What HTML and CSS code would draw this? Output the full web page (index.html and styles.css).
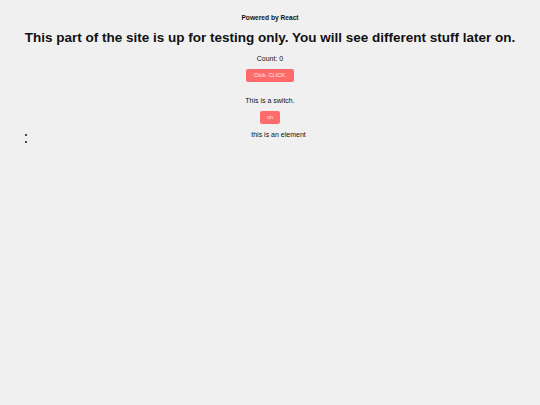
FILE: index.html
```html
<!DOCTYPE html>
<html>
<head>
<meta charset="utf-8">
<link rel="stylesheet" href="styles.css">
</head>
<body>
<div class="app">
  <h5 class="powered">Powered by React</h5>
  <h1 class="title">This part of the site is up for testing only. You will see different stuff later on.</h1>
  <p class="count">Count: 0</p>
  <button class="btn btn-click">Click. CLICK.</button>
  <p class="switch-text">This is a switch.</p>
  <button class="btn btn-on">on</button>
  <ul class="list">
    <li>this is an element</li>
    <li></li>
  </ul>
</div>
</body>
</html>
```
FILE: styles.css
```css
html, body {
  background: #f0f0f0;
}
body {
  margin: 8px;
  font-family: "Liberation Sans", Arial, sans-serif;
  font-size: 7px;
  color: #111;
}
.app {
  text-align: center;
}
.powered {
  font-size: 6.64px;
  font-weight: bold;
  margin: 6px 0 0;
}
.title {
  font-size: 13.5px;
  font-weight: bold;
  margin: 9px 0 0;
}
.count {
  margin: 9.5px 0 0;
}
.btn {
  font-family: "Liberation Sans", Arial, sans-serif;
  background: #ff6b6b;
  color: #ffe8e8;
  border: none;
  border-radius: 2px;
  font-size: 5.5px;
  height: 13px;
  padding: 0 6px;
}
.btn-click {
  margin-top: 7px;
  width: 48px;
}
.switch-text {
  margin: 15px 0 0;
}
.btn-on {
  margin-top: 7px;
  width: 20px;
  padding: 0;
}
.list {
  margin: 7px 11px 0 0;
  padding-left: 28px;
  line-height: 7px;
}
```
